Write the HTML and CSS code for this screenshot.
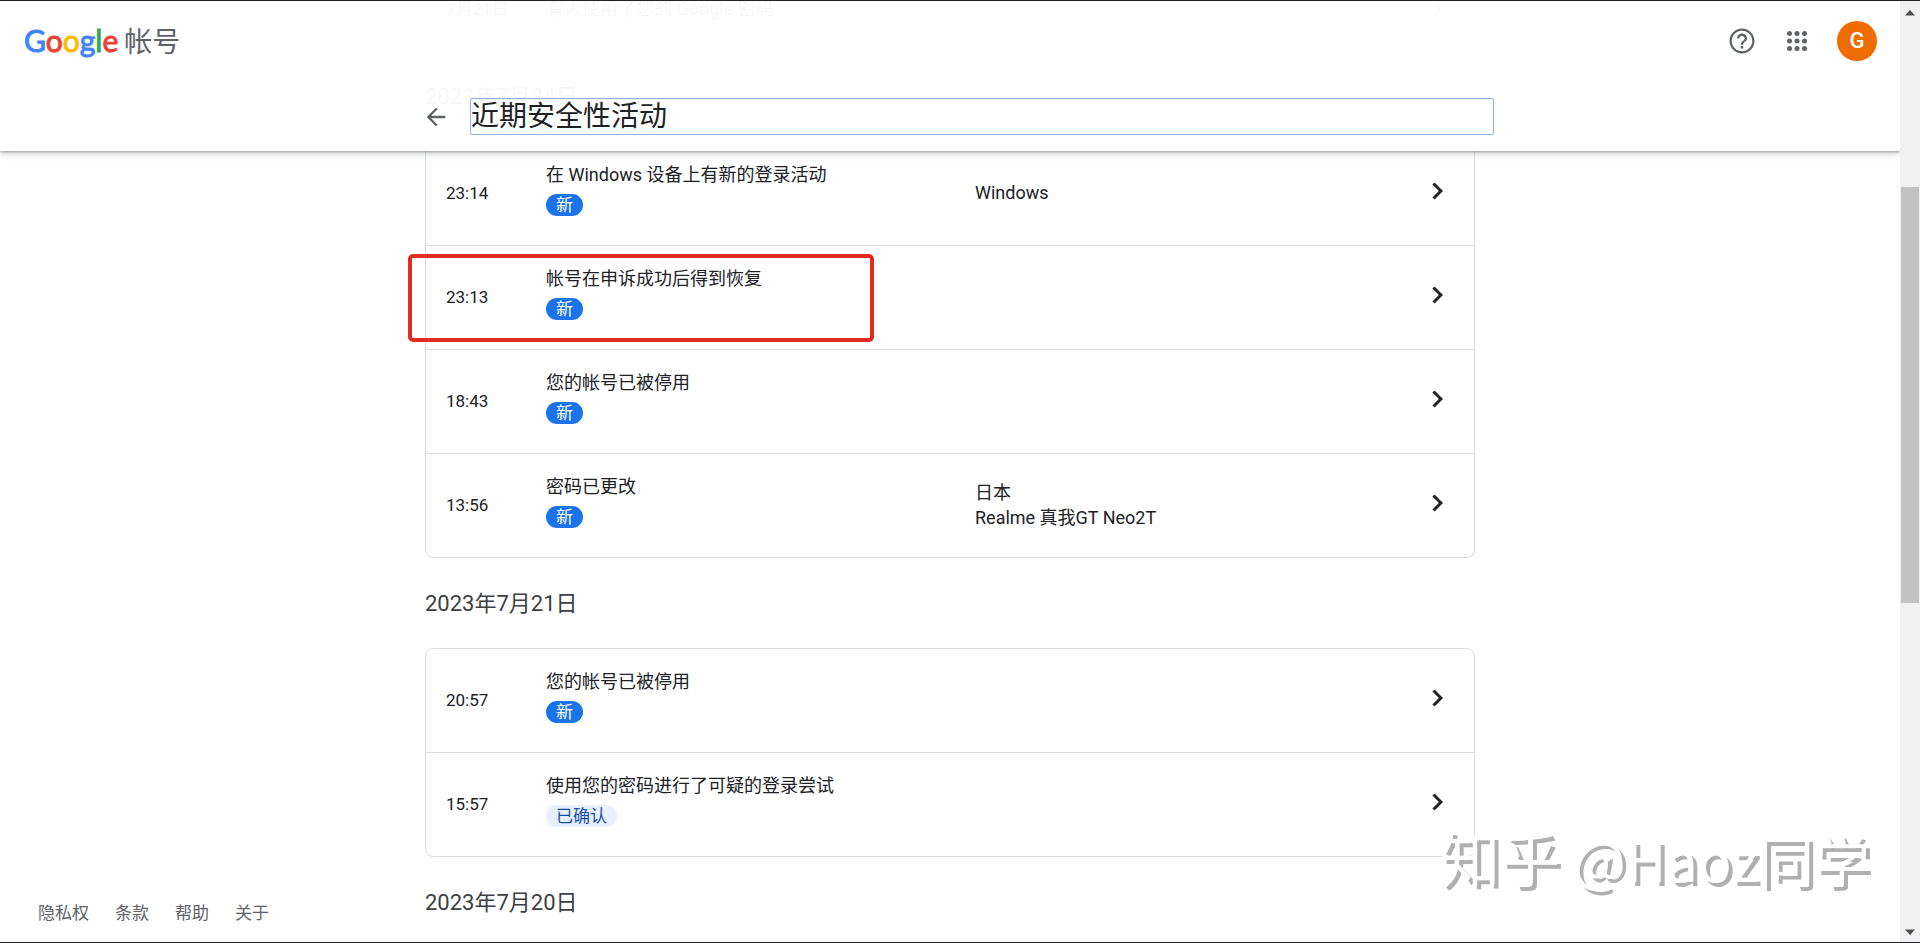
FILE: index.html
```html
<!DOCTYPE html>
<html lang="zh-CN">
<head>
<meta charset="utf-8">
<title>近期安全性活动</title>
<link rel="stylesheet" href="styles.css">
</head>
<body>
<svg class="defs" aria-hidden="true">
  <symbol id="chevron" viewBox="0 0 24 24"><path d="M9.4 5.800 8 7.200l4.800 4.800L8 16.800l1.400 1.400 6.200-6.200z" fill="currentColor" stroke="currentColor" stroke-width=".3"/></symbol>
</svg>
<div class="window">
  <div class="page">
    <header class="topbar">
      <div class="brandbar">
        <a class="brand" href="#"><span class="logo"><span class="blue">G</span><span class="red">o</span><span class="yellow">o</span><span class="blue">g</span><span class="green">l</span><span class="red">e</span></span><span class="product">帐号</span></a>
        <div class="tools">
          <button class="tool" type="button" aria-label="帮助"><svg width="30" height="30" viewBox="0 0 24 24"><path fill="currentColor" d="M11 18h2v-2h-2v2zm1-16C6.480 2 2 6.480 2 12s4.480 10 10 10 10-4.480 10-10S17.520 2 12 2zm0 18.200c-4.530 0-8.200-3.670-8.200-8.200S7.470 3.800 12 3.800s8.200 3.670 8.200 8.200-3.670 8.200-8.200 8.200zM12 6c-2.210 0-4 1.790-4 4h1.900c0-1.200.9-2.100 2.100-2.100s2.100.9 2.100 2.100c0 2-3.050 1.900-3.050 5h1.900c0-2.400 3.050-2.600 3.050-5 0-2.210-1.790-4-4-4z"/></svg></button>
          <button class="tool" type="button" aria-label="应用"><svg width="30" height="30" viewBox="0 0 24 24"><g fill="currentColor"><circle cx="6" cy="6" r="2"/><circle cx="12" cy="6" r="2"/><circle cx="18" cy="6" r="2"/><circle cx="6" cy="12" r="2"/><circle cx="12" cy="12" r="2"/><circle cx="18" cy="12" r="2"/><circle cx="6" cy="18" r="2"/><circle cx="12" cy="18" r="2"/><circle cx="18" cy="18" r="2"/></g></svg></button>
          <button class="avatar" type="button">G</button>
        </div>
      </div>
      <div class="titlebar">
        <button class="tool" type="button" aria-label="返回"><svg width="28" height="28" viewBox="0 0 24 24"><path fill="currentColor" d="M20 11H7.830l5.590-5.590L12 4l-8 8 8 8 1.410-1.410L7.830 13H20v-2z"/></svg></button>
        <h1 class="title" tabindex="-1">近期安全性活动</h1>
      </div>
    </header>

    <div class="content">
      <nav class="legal">
        <a href="#">隐私权</a><a href="#">条款</a><a href="#">帮助</a><a href="#">关于</a>
      </nav>
      <main class="feed">
        <div class="card card-passed">
          <a class="row row-passed" href="#">
            <span class="time">7月21日</span>
            <span class="event">有人使用了您的 Google 密码</span>
            <span></span>
            <svg class="chevron"><use href="#chevron"/></svg>
          </a>
        </div>

        <h2 class="date">2023年7月24日</h2>
        <div class="card">
          <a class="row" href="#">
            <span class="time">23:14</span>
            <span class="event">在 Windows 设备上有新的登录活动<span class="badge">新</span></span>
            <span class="device">Windows</span>
            <svg class="chevron"><use href="#chevron"/></svg>
          </a>
          <a class="row marked" href="#">
            <span class="time">23:13</span>
            <span class="event">帐号在申诉成功后得到恢复<span class="badge">新</span></span>
            <span class="device"></span>
            <svg class="chevron"><use href="#chevron"/></svg>
          </a>
          <a class="row" href="#">
            <span class="time">18:43</span>
            <span class="event">您的帐号已被停用<span class="badge">新</span></span>
            <span class="device"></span>
            <svg class="chevron"><use href="#chevron"/></svg>
          </a>
          <a class="row" href="#">
            <span class="time">13:56</span>
            <span class="event">密码已更改<span class="badge">新</span></span>
            <span class="device">日本<br>Realme 真我GT Neo2T</span>
            <svg class="chevron"><use href="#chevron"/></svg>
          </a>
        </div>

        <h2 class="date">2023年7月21日</h2>
        <div class="card">
          <a class="row" href="#">
            <span class="time">20:57</span>
            <span class="event">您的帐号已被停用<span class="badge">新</span></span>
            <span class="device"></span>
            <svg class="chevron"><use href="#chevron"/></svg>
          </a>
          <a class="row" href="#">
            <span class="time">15:57</span>
            <span class="event">使用您的密码进行了可疑的登录尝试<span class="badge badge-confirmed">已确认</span></span>
            <span class="device"></span>
            <svg class="chevron"><use href="#chevron"/></svg>
          </a>
        </div>

        <h2 class="date">2023年7月20日</h2>
      </main>
    </div>
  </div>

  <div class="scrollbar" aria-hidden="true">
    <svg width="10" height="6" viewBox="0 0 10 6"><path d="M0 5.500 5 0l5 5.500z" fill="#505050"/></svg>
    <div class="track"><div class="thumb"></div></div>
    <svg width="10" height="6" viewBox="0 0 10 6"><path d="M0 .5h10L5 6z" fill="#505050"/></svg>
  </div>
  <div class="watermark"><span class="site">知乎</span> <span>@Haoz同学</span></div>
</div>
</body>
</html>
```
FILE: styles.css
```css
*, *::after { box-sizing: border-box; }

body {
  margin: 0;
  background: #fff;
  color: #202124;
  font: 400 18px/26px Roboto, "Noto Sans CJK SC", sans-serif;
}

a { color: inherit; text-decoration: none; }
button { margin: 0; padding: 0; border: 0; background: none; font: inherit; color: inherit; }
h1, h2 { margin: 0; font-weight: 400; }
.defs { display: none; }

.window {
  position: relative;
  display: flex;
  height: 100vh;
  overflow: hidden;
  border-top: 1px solid #202124;
  border-bottom: 1px solid #202124;
}

.page { position: relative; flex: 1; min-width: 0; overflow: hidden; }

/* Header, laid over the scrolled list */
.topbar {
  position: absolute;
  z-index: 2;
  top: 0;
  left: 0;
  right: 0;
  height: 150px;
  background: rgba(255, 255, 255, .96);
  box-shadow: 0 1px 3px rgba(60, 64, 67, .5), 0 3px 9px rgba(60, 64, 67, .15);
}

.brandbar {
  display: flex;
  align-items: center;
  justify-content: space-between;
  height: 80px;
  padding: 0 23px 0 24px;
}

.brand { display: flex; align-items: baseline; gap: 6px; color: #5f6368; }
.logo { font: 400 30px/40px Lato, sans-serif; -webkit-text-stroke: 1px currentColor; }
.product { font-size: 28px; line-height: 40px; }
.blue { color: #4285f4; }
.red { color: #ea4335; }
.yellow { color: #fbbc05; }
.green { color: #34a853; }

.tools { display: flex; align-items: center; gap: 25px; }
.tool { display: flex; color: #5f6368; }
.avatar {
  width: 40px;
  height: 40px;
  border-radius: 50%;
  background: #ef6c00;
  color: #fff;
  font-size: 22px;
  font-weight: 500;
}

.titlebar {
  display: flex;
  align-items: center;
  gap: 20px;
  max-width: 1088px;
  margin: 0 auto;
  padding: 17px 0 0 16px;
}
.title {
  flex: 1;
  border: 1px solid #8fb0ea;
  border-radius: 2px;
  font-size: 28px;
  line-height: 35px;
}

/* List */
.content {
  display: grid;
  grid-template-columns: 1fr minmax(0, 1050px) 1fr;
  grid-template-rows: minmax(0, 1fr);
  height: 100%;
}

.legal {
  align-self: end;
  display: flex;
  gap: 26px;
  padding: 0 0 16px 38px;
  color: #5f6368;
  font-size: 17px;
  white-space: nowrap;
}

.card { border: 1px solid #dadce0; border-radius: 8px; }
.card-passed { border-top: 0; border-radius: 0 0 8px 8px; }

.row {
  position: relative;
  display: grid;
  grid-template-columns: 100px 429px 1fr 32px;
  align-items: center;
  min-height: 103px;
  padding: 0 20px 2px;
}
.row + .row { min-height: 104px; border-top: 1px solid #dadce0; }
.row-passed {
  align-items: start;
  min-height: 49px;
  line-height: 16px;
}
.time { font-size: 17px; }
.event { align-self: start; padding-top: 20px; }
.device { line-height: 25px; }
.chevron { width: 32px; height: 32px; margin-bottom: 4px; }

.row-passed .event { padding: 0; }
.row-passed .chevron { height: 16px; }

.badge {
  display: block;
  width: max-content;
  margin-top: 6px;
  padding: 0 10px;
  border-radius: 11px;
  background: #1a73e8;
  color: #fff;
  font-size: 17px;
  line-height: 22px;
}
.badge-confirmed { background: #e8f0fe; color: #174ea6; }

.marked::after {
  content: "";
  position: absolute;
  top: 8px;
  left: -18px;
  width: 466px;
  height: 88px;
  border: 4px solid #e42b22;
  border-radius: 5px;
}

.date {
  padding: 31px 0 29px;
  color: #3c4043;
  font-size: 22px;
  line-height: 30px;
}

/* Scrollbar */
.scrollbar {
  display: flex;
  flex-direction: column;
  align-items: center;
  gap: 6px;
  width: 20px;
  padding: 9px 1px 7px;
  background: #f1f1f1;
}
.track { flex: 1; align-self: stretch; padding-top: 165px; }
.thumb { height: 47%; min-height: 416px; background: #c1c1c1; }

.watermark {
  position: absolute;
  z-index: 3;
  right: 50px;
  bottom: 44px;
  color: #fff;
  font: 400 56px/80px "Noto Sans CJK SC", sans-serif;
  text-shadow: 4px 4px 0 #b0b0b0;
}
.site { font-size: 60px; }
```
